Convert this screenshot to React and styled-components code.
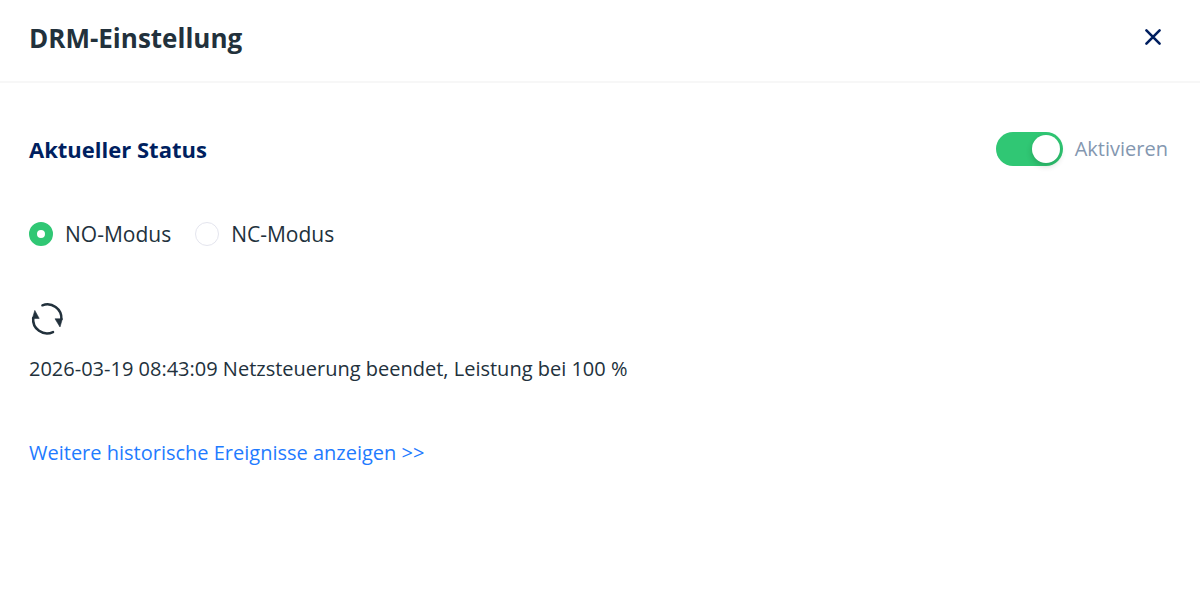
import { useState } from 'react';
import styled, { createGlobalStyle } from 'styled-components';

const App = () => {
  const [active, setActive] = useState(true);
  const [mode, setMode] = useState('NO');

  return (
    <>
      <GlobalStyle />
      <Dialog role='dialog' aria-labelledby='drm-title'>
        <Header>
          <Title id='drm-title'>DRM-Einstellung</Title>
          <CloseButton type='button' aria-label='Schließen'>
            <svg width='18' height='18' viewBox='0 0 18 18' fill='none'>
              <path
                d='M2.4 2.4 15.6 15.6M15.6 2.4 2.4 15.6'
                stroke='currentColor'
                strokeWidth='2.6'
                strokeLinecap='round'
              />
            </svg>
          </CloseButton>
        </Header>
        <Content>
          <StatusRow>
            <SubTitle>Aktueller Status</SubTitle>
            <SwitchLabel>
              <Switch
                type='checkbox'
                role='switch'
                checked={active}
                onChange={(e) => setActive(e.target.checked)}
              />
              Aktivieren
            </SwitchLabel>
          </StatusRow>
          <Modes role='radiogroup' aria-label='Modus'>
            {['NO', 'NC'].map((name) => (
              <ModeLabel key={name}>
                <Radio
                  type='radio'
                  name='mode'
                  value={name}
                  checked={mode === name}
                  onChange={() => setMode(name)}
                />
                {name}-Modus
              </ModeLabel>
            ))}
          </Modes>
          <RefreshButton type='button' aria-label='Aktualisieren'>
            <svg width='36' height='36' viewBox='0 0 36 36' fill='none'>
              <path
                d='M13.4 4.3A14 14 0 0 1 32.4 18M24 31.1A14 14 0 0 1 4.2 17'
                stroke='currentColor'
                strokeWidth='2.5'
                strokeLinecap='round'
              />
              <path
                d='M26 17.8H33.4L31 26ZM10.2 17.4H3.4L5.8 9.4Z'
                fill='currentColor'
                stroke='currentColor'
                strokeWidth='0.6'
              />
            </svg>
          </RefreshButton>
          <Message>2026-03-19 08:43:09 Netzsteuerung beendet, Leistung bei 100 %</Message>
          <HistoryLink href='#history'>Weitere historische Ereignisse anzeigen &gt;&gt;</HistoryLink>
        </Content>
      </Dialog>
    </>
  );
};

const GlobalStyle = createGlobalStyle`
  * {
    box-sizing: border-box;
  }
  body {
    margin: 0;
    background: #fff;
    color: #22313c;
    font-family: 'Segoe UI', 'Open Sans', 'Noto Sans', sans-serif;
    font-size: 20px;
    line-height: 32px;
  }
`;
const Dialog = styled.section`
  width: 100%;
  min-height: 100vh;
  background: #fff;
`;
const Header = styled.header`
  display: flex;
  justify-content: space-between;
  align-items: flex-start;
  padding: 20px 32px 24px 29px;
  border-bottom: 2px solid #f7f7f7;
`;
const Title = styled.h1`
  margin: 0;
  font-size: 26px;
  line-height: 37px;
  font-weight: 700;
`;
const CloseButton = styled.button`
  display: flex;
  align-items: center;
  justify-content: center;
  width: 30px;
  height: 34px;
  padding: 0;
  border: 0;
  background: none;
  color: #001f60;
  cursor: pointer;
`;
const Content = styled.main`
  display: flex;
  flex-direction: column;
  align-items: flex-start;
  padding: 49px 32px 32px 29px;
`;
const StatusRow = styled.div`
  display: flex;
  justify-content: space-between;
  align-items: center;
  width: 100%;
`;
const SubTitle = styled.h2`
  margin: 0;
  color: #001f60;
  font-size: 22px;
  line-height: 34px;
  font-weight: 700;
`;
const SwitchLabel = styled.label`
  display: flex;
  align-items: center;
  gap: 12px;
  color: #8497b0;
  cursor: pointer;
`;
const Switch = styled.input`
  appearance: none;
  display: flex;
  width: 67px;
  height: 34px;
  margin: 0;
  padding: 3px;
  border-radius: 17px;
  background: #c4cbd4;
  cursor: pointer;
  &::before {
    content: '';
    width: 28px;
    height: 28px;
    border-radius: 50%;
    background: #fff;
    box-shadow: 0 3px 6px rgba(0, 35, 11, 0.2);
  }
  &:checked {
    justify-content: flex-end;
    background: #30c774;
  }
`;
const Modes = styled.div`
  display: flex;
  gap: 24px;
  margin-top: 52px;
`;
const ModeLabel = styled.label`
  display: flex;
  align-items: center;
  gap: 12px;
  font-size: 21px;
  cursor: pointer;
`;
const Radio = styled.input`
  appearance: none;
  width: 24px;
  height: 24px;
  margin: 0;
  border: 1px solid #e4e5ee;
  border-radius: 50%;
  background: #fff;
  cursor: pointer;
  &:checked {
    border: 8px solid #30c774;
  }
`;
const RefreshButton = styled.button`
  display: flex;
  margin-top: 51px;
  padding: 0;
  border: 0;
  background: none;
  color: #22313c;
  cursor: pointer;
`;
const Message = styled.p`
  margin: 16px 0 0;
`;
const HistoryLink = styled.a`
  margin-top: 52px;
  color: #1f7bff;
  text-decoration: none;
`;

export default App;
